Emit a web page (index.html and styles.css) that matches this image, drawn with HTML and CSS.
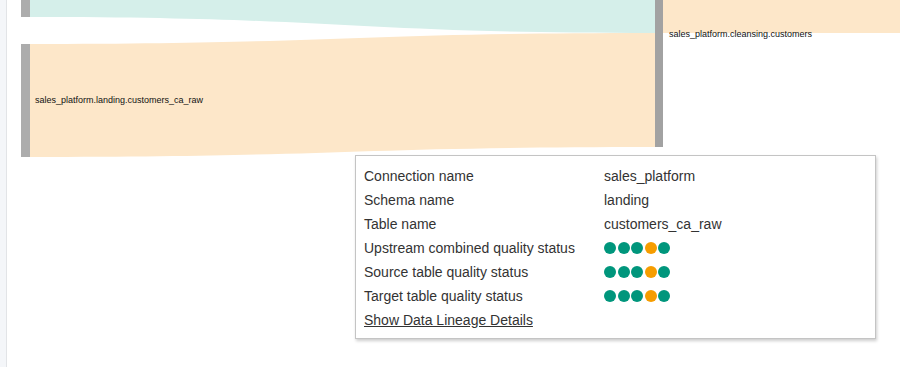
FILE: index.html
```html
<!DOCTYPE html>
<html lang="en">
<head>
    <meta charset="UTF-8">
    <title>Data Lineage</title>
    <link rel="stylesheet" href="styles.css">
</head>
<body>
    <div class="page">
        <div class="side-strip"></div>

        <div class="canvas">
            <svg class="sankey" width="894" height="367" viewBox="6 0 894 367">
                <!-- links -->
                <path class="link teal" d="M30,-99 C342,-99 342,-83 655,-83 L655,33 C342,33 342,17 30,17 Z"/>
                <path class="link orange" d="M30,44 C342,44 342,33 655,33 L655,147 C342,147 342,157 30,157 Z"/>
                <rect class="link orange" x="663" y="-80" width="240" height="113"/>

                <!-- nodes -->
                <rect class="node left" x="21" y="-99" width="9" height="116"/>
                <rect class="node left" x="21" y="44" width="9" height="113"/>
                <rect class="node right" x="655" y="-83" width="8" height="230"/>

                <text class="node-label" x="35" y="103">sales_platform.landing.customers_ca_raw</text>
                <text class="node-label" x="669" y="37">sales_platform.cleansing.customers</text>
            </svg>

            <div class="tooltip">
                <div class="row"><span class="key">Connection name</span><span>sales_platform</span></div>
                <div class="row"><span class="key">Schema name</span><span>landing</span></div>
                <div class="row"><span class="key">Table name</span><span>customers_ca_raw</span></div>
                <div class="row">
                    <span class="key">Upstream combined quality status</span>
                    <span class="dots"><i class="ok"></i><i class="ok"></i><i class="ok"></i><i class="warn"></i><i class="ok"></i></span>
                </div>
                <div class="row">
                    <span class="key">Source table quality status</span>
                    <span class="dots"><i class="ok"></i><i class="ok"></i><i class="ok"></i><i class="warn"></i><i class="ok"></i></span>
                </div>
                <div class="row">
                    <span class="key">Target table quality status</span>
                    <span class="dots"><i class="ok"></i><i class="ok"></i><i class="ok"></i><i class="warn"></i><i class="ok"></i></span>
                </div>
                <div class="row"><a href="#" class="details-link">Show Data Lineage Details</a></div>
            </div>
        </div>
    </div>
</body>
</html>
```

FILE: styles.css
```css
body {
    margin: 0;
    font-family: 'Liberation Sans', Arial, sans-serif;
    background: white;
    overflow: hidden;
}
.page {
    display: flex;
    height: 367px;
}
.side-strip {
    width: 6px;
    background: #f4f6f9;
    border-right: 1px solid #e2e4e7;
}
.canvas {
    position: relative;
    flex: 1;
}
.sankey {
    display: block;
    margin-left: -1px;
}
.link.teal {
    fill: #d5efea;
}
.link.orange {
    fill: #fde7c9;
}
.node.left {
    fill: #acacac;
}
.node.right {
    fill: #a2a2a2;
}
.node-label {
    font-family: 'Liberation Sans', Arial, sans-serif;
    font-size: 9px;
    fill: #111;
}
.tooltip {
    position: absolute;
    left: 348px;
    top: 155px;
    width: 503px;
    padding: 8px 8px 6px 8px;
    background: white;
    border: 1px solid #c4c4c4;
    box-shadow: 1px 2px 3px rgba(0, 0, 0, 0.2);
    color: #333;
    font-size: 14px;
}
.row {
    display: flex;
    align-items: center;
    height: 24px;
}
.key {
    width: 240px;
}
.dots {
    display: flex;
    gap: 1.5px;
}
.dots i {
    width: 12px;
    height: 12px;
    border-radius: 50%;
}
.dots .ok {
    background: #00967c;
}
.dots .warn {
    background: #f69d00;
}
.details-link {
    color: #333;
    text-decoration: underline;
}
```
